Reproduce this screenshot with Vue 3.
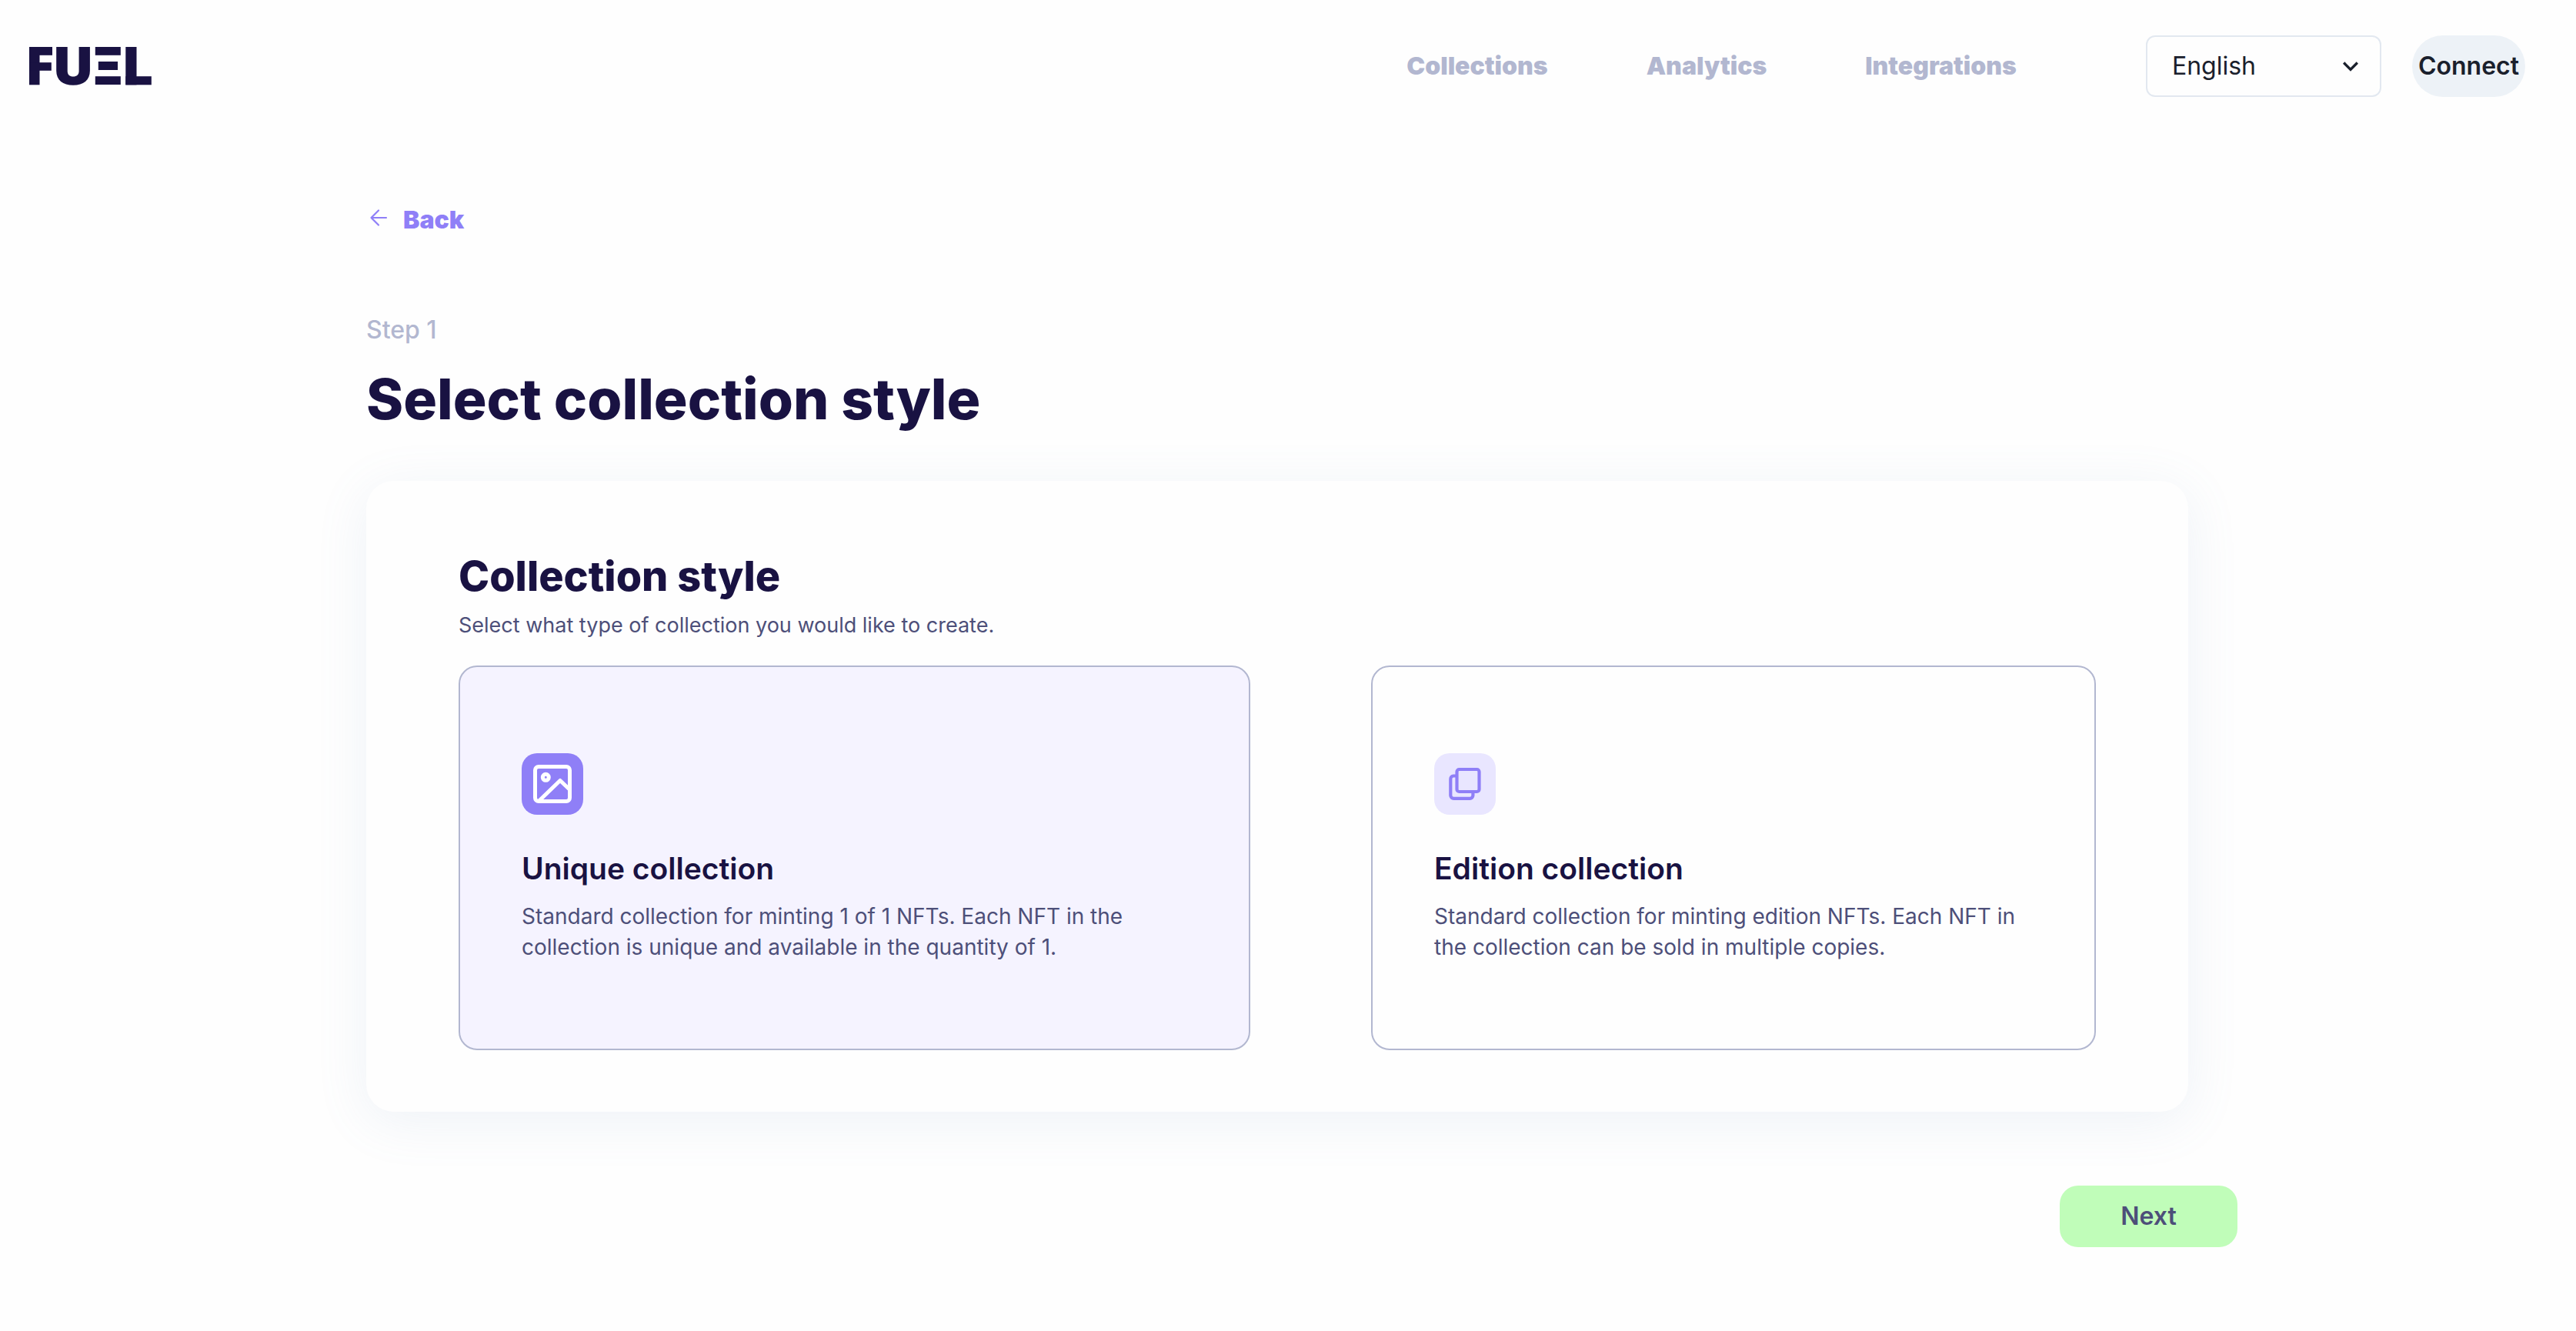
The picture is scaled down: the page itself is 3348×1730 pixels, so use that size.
<script setup>
import { ref } from 'vue'

const links = ['Collections', 'Analytics', 'Integrations']
const language = ref('English')
const selected = ref('unique')

const styles = [
  {
    id: 'unique',
    title: 'Unique collection',
    text: 'Standard collection for minting 1 of 1 NFTs. Each NFT in the collection is unique and available in the quantity of 1.',
  },
  {
    id: 'edition',
    title: 'Edition collection',
    text: 'Standard collection for minting edition NFTs. Each NFT in the collection can be sold in multiple copies.',
  },
]
</script>

<template>
  <div class="page">
    <header class="header">
      <a href="#" class="logo" aria-label="Fuel">
        <svg width="160" height="50" viewBox="0 0 160 50" aria-hidden="true">
          <g fill="currentColor">
            <rect x="0" y="0" width="13.5" height="49.3" />
            <rect x="0" y="0" width="30" height="10.8" />
            <rect x="0" y="20.2" width="28.8" height="10.6" />
            <rect x="85.8" y="0" width="33" height="10.8" />
            <rect x="89.8" y="19" width="25.2" height="11" />
            <rect x="85.8" y="38.2" width="33" height="10.8" />
            <rect x="125.3" y="0" width="14.2" height="49.3" />
            <rect x="125.3" y="38.2" width="33.5" height="11.1" />
          </g>
          <path
            d="M35.2 0H49.7V31.5C49.7 36 52.5 38.6 57.1 38.6C61.7 38.6 64.6 36 64.6 31.5V0H78.9V31C78.9 43 70.5 49.8 57.1 49.8C43.7 49.8 35.2 43 35.2 31Z"
            fill="currentColor"
          />
        </svg>
      </a>
      <nav class="nav">
        <a v-for="link in links" :key="link" href="#">{{ link }}</a>
      </nav>
      <div class="language">
        <select v-model="language" aria-label="Language">
          <option>English</option>
        </select>
        <svg class="chevron" width="40" height="40" viewBox="0 0 24 24" aria-hidden="true">
          <path d="M16.59 8.59L12 13.17L7.41 8.59L6 10l6 6l6-6z" fill="currentColor" />
        </svg>
      </div>
      <button type="button" class="connect">Connect</button>
    </header>

    <main class="main">
      <div class="content">
        <a href="#" class="back">
          <svg width="24" height="24" viewBox="0 0 24 24" aria-hidden="true">
            <path
              d="M22 12H2.5M12 2.5L2.5 12L12 21.5"
              fill="none"
              stroke="currentColor"
              stroke-width="2.2"
              stroke-linecap="round"
              stroke-linejoin="round"
            />
          </svg>
          Back
        </a>
        <p class="step">Step 1</p>
        <h1>Select collection style</h1>

        <section class="panel">
          <h2>Collection style</h2>
          <p class="hint">Select what type of collection you would like to create.</p>
          <div class="options">
            <button
              v-for="item in styles"
              :key="item.id"
              type="button"
              class="option"
              :class="{ active: selected === item.id }"
              :aria-pressed="selected === item.id"
              @click="selected = item.id"
            >
              <svg
                v-if="item.id === 'unique'"
                class="icon icon-unique"
                width="80"
                height="80"
                viewBox="0 0 80 80"
                fill="none"
                stroke="currentColor"
                stroke-width="5"
                aria-hidden="true"
              >
                <rect x="17.5" y="17.5" width="45" height="45" rx="4.5" />
                <circle cx="31.3" cy="31.3" r="4" />
                <path d="M22.5 62L50 35.5L61.5 46.5" stroke-linejoin="round" />
              </svg>
              <svg
                v-else
                class="icon icon-edition"
                width="80"
                height="80"
                viewBox="0 0 80 80"
                fill="none"
                stroke="currentColor"
                stroke-width="4.2"
                stroke-linejoin="round"
                aria-hidden="true"
              >
                <rect x="29.5" y="21" width="29" height="29" rx="3" />
                <path
                  d="M29 29.5H25A4 4 0 0 0 21.3 33.5V55A4 4 0 0 0 25.3 58.8H46.5A4 4 0 0 0 50.4 55V51"
                />
              </svg>
              <span class="option-title">{{ item.title }}</span>
              <span class="option-text">{{ item.text }}</span>
            </button>
          </div>
        </section>
      </div>
      <button type="button" class="next">Next</button>
    </main>
  </div>
</template>

<style>
body {
  background: #fefefe;
}
</style>

<style scoped>
.page {
  font-family: Inter, sans-serif;
  font-size: 32px;
  line-height: 48px;
  color: #191242;
}

.page * {
  box-sizing: border-box;
}

a {
  text-decoration: none;
}

button,
select {
  margin: 0;
  font: inherit;
  cursor: pointer;
}

.header {
  display: flex;
  align-items: center;
  padding: 46px 66px 46px 38px;
}

.logo {
  margin-right: auto;
  color: #191242;
}

.logo svg {
  display: block;
}

.nav {
  display: flex;
  gap: 128px;
  margin-right: 168px;
}

.nav a {
  font-weight: 900;
  color: #b2b7d0;
}

.language {
  position: relative;
  width: 306px;
  margin-right: 40px;
}

.language select {
  appearance: none;
  display: block;
  width: 100%;
  height: 80px;
  padding: 0 32px;
  border: 2px solid #e2e8f0;
  border-radius: 12px;
  background: transparent;
  color: #1a202c;
}

.chevron {
  position: absolute;
  top: 20px;
  right: 20px;
  color: #1a202c;
  pointer-events: none;
}

.connect {
  height: 80px;
  padding: 0 8px;
  border: 0;
  border-radius: 40px;
  background: #edf2f7;
  font-weight: 600;
  color: #1a202c;
}

.main {
  display: flex;
  flex-direction: column;
  max-width: 2468px;
  margin: 0 auto;
  padding: 88px 0 108px;
}

.content {
  padding: 0 64px 0 36px;
}

.back {
  display: inline-flex;
  align-items: center;
  gap: 20px;
  padding-left: 4px;
  font-weight: 900;
  color: #8f7ff7;
}

.back svg {
  margin-bottom: 6px;
}

.step {
  margin: 95px 0 0;
  font-weight: 500;
  color: #b2b7d0;
}

h1 {
  margin: 16px 0 0;
  font-size: 73px;
  line-height: 100px;
  font-weight: 800;
}

.panel {
  margin-top: 56px;
  padding: 84px 120px 80px;
  border-radius: 36px;
  background: #fefefe;
  box-shadow: 0 12px 68px rgba(112, 144, 190, 0.11);
}

h2 {
  margin: 0;
  font-size: 54px;
  line-height: 80px;
  font-weight: 800;
}

.hint {
  margin: 4px 0 32px;
  font-size: 27px;
  line-height: 40px;
  color: #4d4f79;
}

.options {
  display: grid;
  grid-template-columns: 1029fr 942fr;
  gap: 157px;
}

.option {
  display: block;
  min-height: 500px;
  padding: 112px 80px;
  border: 2px solid #b2b7d0;
  border-radius: 24px;
  background: transparent;
  text-align: left;
  color: #191242;
}

.option.active {
  background: #f5f3ff;
}

.icon {
  display: block;
  border-radius: 20px;
}

.icon-unique {
  background: #8f7ff7;
  color: #ffffff;
}

.icon-edition {
  background: #e9e6ff;
  color: #8f7ff7;
}

.option-title {
  display: block;
  margin-top: 40px;
  font-size: 39px;
  line-height: 60px;
  font-weight: 600;
}

.option-text {
  display: block;
  margin-top: 12px;
  font-size: 28px;
  line-height: 40px;
  color: #4d4f79;
}

.next {
  align-self: flex-end;
  width: 231px;
  height: 80px;
  margin-top: 96px;
  border: 0;
  border-radius: 24px;
  background: #c0fdb9;
  font-weight: 600;
  color: #4d4f79;
}
</style>
